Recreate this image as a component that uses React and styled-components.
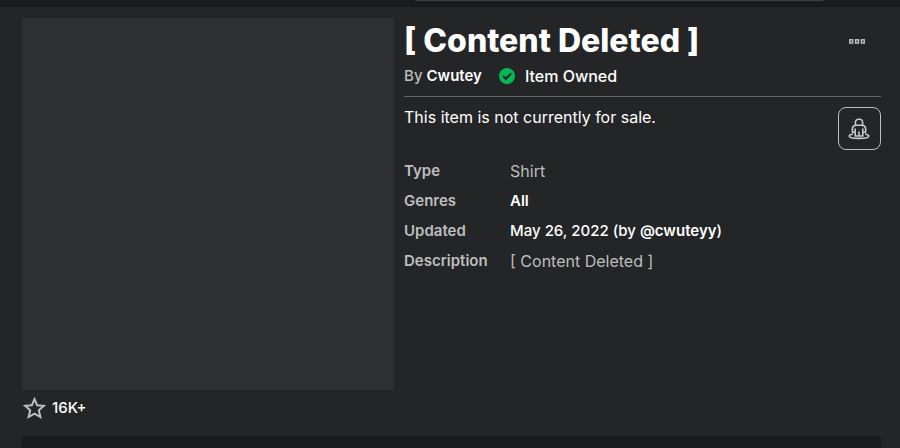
import React from 'react';
import styled, { createGlobalStyle } from 'styled-components';

const GlobalStyle = createGlobalStyle`
  * {
    box-sizing: border-box;
  }

  body {
    margin: 0;
    background-color: #232527;
    color: #ffffff;
    font-family: Inter, 'Open Sans', sans-serif;
    font-size: 15px;
    line-height: 20px;
  }
`;

const Page = styled.div`
  display: flex;
  flex-direction: column;
  min-height: 100vh;
`;

const TopBar = styled.header`
  display: flex;
  align-items: flex-end;
  justify-content: flex-end;
  height: 7px;
  padding: 0 74px 5px 0;
  background-color: #191b1d;
  border-bottom: 1px solid #151618;
  overflow: hidden;
`;

const SearchInput = styled.input`
  width: 50%;
  height: 36px;
  padding: 0 12px;
  background-color: #191b1d;
  border: 1px solid #3c3e40;
  border-radius: 4px;
  color: #ffffff;
  font: inherit;
`;

const Main = styled.main`
  display: flex;
  flex: 1;
  flex-direction: column;
  padding: 11px 19px 0 22px;
`;

const Item = styled.section`
  display: grid;
  grid-template-columns: 39fr 50fr;
  column-gap: 10px;
`;

const Thumbnail = styled.div`
  aspect-ratio: 1;
  background-color: #2f3032;
`;

const FavoriteButton = styled.button`
  display: flex;
  align-items: center;
  gap: 6px;
  margin-top: 6px;
  padding: 0 1px;
  background: none;
  border: none;
  color: #ffffff;
  font: inherit;
  font-weight: 500;
  line-height: 24px;
  cursor: pointer;

  svg {
    color: #bdbebe;
  }
`;

const Header = styled.div`
  display: flex;
  align-items: flex-start;
  justify-content: space-between;
  padding-bottom: 10px;
  border-bottom: 1px solid #656668;
`;

const Title = styled.h1`
  margin: 3px 0 5px;
  font-size: 32px;
  font-weight: 800;
  line-height: 40px;
`;

const Byline = styled.div`
  display: flex;
  align-items: center;
  color: #bdbebe;
  font-weight: 500;

  svg {
    margin: 0 10px 0 17px;
  }
`;

const TextLink = styled.a`
  color: #ffffff;
  font-weight: 600;
  text-decoration: none;

  &:hover {
    text-decoration: underline;
  }
`;

const Owned = styled.span`
  color: #ffffff;
  font-size: 16px;
`;

const MenuButton = styled.button`
  display: flex;
  margin-top: 13px;
  padding: 8px 16px;
  background: none;
  border: none;
  cursor: pointer;
`;

const SaleRow = styled.div`
  display: flex;
  align-items: flex-start;
  justify-content: space-between;
  padding-top: 10px;
  font-size: 16px;
`;

const TryOnButton = styled.button`
  display: flex;
  align-items: center;
  justify-content: center;
  width: 43px;
  height: 43px;
  padding: 0;
  background: none;
  border: 1px solid #bdbebe;
  border-radius: 8px;
  cursor: pointer;
`;

const Details = styled.dl`
  display: grid;
  grid-template-columns: 106px 1fr;
  row-gap: 10px;
  margin: 11px 0 0;
`;

const Label = styled.dt`
  color: #bdbebe;
  font-weight: 600;
`;

const Value = styled.dd`
  margin: 0;
  color: ${({ $bright }) => ($bright ? '#ffffff' : '#bdbebe')};
  font-size: ${({ $bright }) => ($bright ? '15px' : '16px')};
  font-weight: ${({ $bright }) => ($bright ? 500 : 400)};
`;

const BottomPanel = styled.div`
  flex: 1;
  min-height: 12px;
  margin-top: 16px;
  background-color: #1b1c1e;
`;

const CheckIcon = () => (
  <svg width="16" height="16" viewBox="0 0 16 16" aria-hidden="true">
    <circle cx="8" cy="8" r="8" fill="#02b757" />
    <path d="M4 8 6.8 10.8 12.2 5.3" fill="none" stroke="#232527" strokeWidth="2" />
  </svg>
);

const MoreIcon = () => (
  <svg width="16" height="5" viewBox="0 0 16 5" fill="#55585a" stroke="#bdbebe" strokeWidth="1.3" aria-hidden="true">
    <rect x="0.7" y="0.7" width="3" height="3.4" />
    <rect x="6.5" y="0.7" width="3" height="3.4" />
    <rect x="12.3" y="0.7" width="3" height="3.4" />
  </svg>
);

const StarIcon = () => (
  <svg width="23" height="23" viewBox="0 0 23 23" fill="none" stroke="currentColor" strokeWidth="2" aria-hidden="true">
    <path d="M11.5 2.2 14.1 8.2 20.8 8.8 15.8 13.3 17.4 20 11.5 16.6 5.6 20 7.2 13.3 2.2 8.8 8.9 8.2Z" />
  </svg>
);

const AvatarIcon = () => (
  <svg width="22" height="22" viewBox="0 0 22 22" fill="none" stroke="#c8c9c9" strokeWidth="1.6" strokeLinejoin="round" aria-hidden="true">
    <path d="M8 7.2 7.3 5.2Q7.3 1.3 10.6 1.3H11.4Q14.7 1.3 14.7 5.2L14 7.2Z" />
    <path d="M8 7.2Q4.6 7.4 4.4 10.5V14.2H7.2V18H14.8V14.2H17.6V10.5Q17.4 7.4 14 7.2" />
    <path d="M7.2 10.5V14.2M14.8 10.5V14.2M11 13.5V18" />
    <path d="M4.8 16Q1.2 16.8 1.2 18C1.2 21.2 20.8 21.2 20.8 18Q20.8 16.8 17.2 16" />
  </svg>
);

const App = () => {
  return (
    <>
      <GlobalStyle />
      <Page>
        <TopBar>
          <SearchInput type="search" aria-label="Search" />
        </TopBar>
        <Main>
          <Item>
            <div>
              <Thumbnail />
              <FavoriteButton type="button">
                <StarIcon /> 16K+
              </FavoriteButton>
            </div>
            <div>
              <Header>
                <div>
                  <Title>[ Content Deleted ]</Title>
                  <Byline>
                    <span>
                      By <TextLink href="#creator">Cwutey</TextLink>
                    </span>
                    <CheckIcon />
                    <Owned>Item Owned</Owned>
                  </Byline>
                </div>
                <MenuButton type="button" aria-label="More options">
                  <MoreIcon />
                </MenuButton>
              </Header>
              <SaleRow>
                <span>This item is not currently for sale.</span>
                <TryOnButton type="button" aria-label="Try on">
                  <AvatarIcon />
                </TryOnButton>
              </SaleRow>
              <Details>
                <Label>Type</Label>
                <Value>Shirt</Value>
                <Label>Genres</Label>
                <Value $bright>
                  <TextLink href="#genres">All</TextLink>
                </Value>
                <Label>Updated</Label>
                <Value $bright>
                  May 26, 2022 (by <TextLink href="#updater">@cwuteyy</TextLink>)
                </Value>
                <Label>Description</Label>
                <Value>[ Content Deleted ]</Value>
              </Details>
            </div>
          </Item>
          <BottomPanel />
        </Main>
      </Page>
    </>
  );
};

export default App;
